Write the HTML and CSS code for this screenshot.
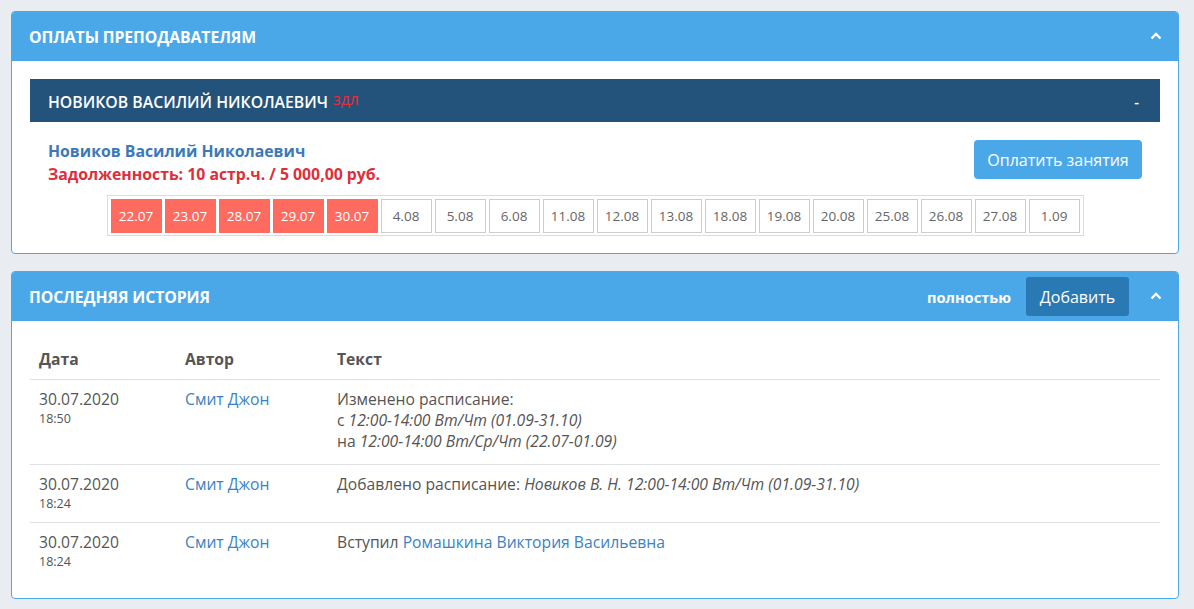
FILE: index.html
```html
<!DOCTYPE html>
<html lang="ru">
<head>
<meta charset="utf-8">
<title>Оплаты преподавателям</title>
<link rel="stylesheet" href="styles.css">
</head>
<body>
<div class="page">
  <section class="panel">
    <header class="panel-head">
      <h2 class="panel-title">Оплаты преподавателям</h2>
      <div class="head-actions">
        <svg class="chev" width="12" height="8" viewBox="0 0 12 8"><polyline points="1.5,6.5 6,2 10.5,6.5" fill="none" stroke="#fff" stroke-width="2.4"/></svg>
      </div>
    </header>
    <div class="panel-body">
      <div class="teacher-head">
        <div class="teacher-title">Новиков Василий Николаевич <span class="tag">здл</span></div>
        <span class="collapse">-</span>
      </div>
      <div class="teacher-info">
        <div class="teacher-text">
          <div class="teacher-name">Новиков Василий Николаевич</div>
          <div class="teacher-debt">Задолженность: 10 астр.ч. / 5 000,00 руб.</div>
        </div>
        <button class="btn-pay">Оплатить занятия</button>
      </div>
      <div class="dates-wrap">
        <div class="dates">
          <span class="date debt">22.07</span>
          <span class="date debt">23.07</span>
          <span class="date debt">28.07</span>
          <span class="date debt">29.07</span>
          <span class="date debt">30.07</span>
          <span class="date">4.08</span>
          <span class="date">5.08</span>
          <span class="date">6.08</span>
          <span class="date">11.08</span>
          <span class="date">12.08</span>
          <span class="date">13.08</span>
          <span class="date">18.08</span>
          <span class="date">19.08</span>
          <span class="date">20.08</span>
          <span class="date">25.08</span>
          <span class="date">26.08</span>
          <span class="date">27.08</span>
          <span class="date">1.09</span>
        </div>
      </div>
    </div>
  </section>

  <section class="panel">
    <header class="panel-head">
      <h2 class="panel-title">Последняя история</h2>
      <div class="head-actions">
        <a class="head-link">полностью</a>
        <button class="btn-add">Добавить</button>
        <svg class="chev" width="12" height="8" viewBox="0 0 12 8"><polyline points="1.5,6.5 6,2 10.5,6.5" fill="none" stroke="#fff" stroke-width="2.4"/></svg>
      </div>
    </header>
    <div class="panel-body panel-body--table">
      <table class="history">
        <thead>
          <tr><th class="c-date">Дата</th><th class="c-author">Автор</th><th>Текст</th></tr>
        </thead>
        <tbody>
          <tr class="tall">
            <td><div>30.07.2020</div><div class="time">18:50</div></td>
            <td><a class="link">Смит Джон</a></td>
            <td>Изменено расписание:<br>с <i>12:00-14:00 Вт/Чт (01.09-31.10)</i><br>на <i>12:00-14:00 Вт/Ср/Чт (22.07-01.09)</i></td>
          </tr>
          <tr>
            <td><div>30.07.2020</div><div class="time">18:24</div></td>
            <td><a class="link">Смит Джон</a></td>
            <td>Добавлено расписание: <i>Новиков В. Н. 12:00-14:00 Вт/Чт (01.09-31.10)</i></td>
          </tr>
          <tr class="last">
            <td><div>30.07.2020</div><div class="time">18:24</div></td>
            <td><a class="link">Смит Джон</a></td>
            <td>Вступил <a class="link">Ромашкина Виктория Васильевна</a></td>
          </tr>
        </tbody>
      </table>
    </div>
  </section>
</div>
</body>
</html>
```

FILE: styles.css
```css
* { box-sizing: border-box; }
html, body { margin: 0; }
body {
  background: #e9edf2;
  font-family: "Open Sans", "Noto Sans", sans-serif;
  color: #555;
  font-size: 15.8px;
}
.page {
  padding: 11px 15px 0 11px;
  display: flex;
  flex-direction: column;
  gap: 17px;
}
.panel {
  background: #fff;
  border: 1px solid #4aa8e8;
  border-radius: 4px;
}
.panel-head {
  height: 49px;
  background: #4aa8e8;
  display: flex;
  align-items: center;
  justify-content: space-between;
  padding: 0 16px 0 17px;
  border-radius: 3px 3px 0 0;
}
.panel-title {
  margin: 0;
  color: #fff;
  font-size: 15.8px;
  font-weight: 700;
  text-transform: uppercase;
  letter-spacing: -0.1px;
}
.head-actions {
  display: flex;
  align-items: center;
}
.chev { display: block; margin-left: 21px; margin-top: -1px; }
.head-link {
  color: #fff;
  font-weight: 700;
  font-size: 14.6px;
  margin-right: 15px;
}
.btn-add {
  height: 39px;
  width: 103px;
  border: 0;
  border-radius: 3px;
  background: #2979b4;
  color: #fff;
  font-family: inherit;
  font-size: 16px;
  padding: 0;
}
.panel-body {
  padding: 18px 18px 17px 18px;
}
.panel-body--table { padding-bottom: 18px; }
.teacher-head {
  height: 43px;
  background: #23527b;
  display: flex;
  align-items: center;
  justify-content: space-between;
  padding: 0 21px 0 18px;
  color: #fff;
}
.teacher-title {
  font-weight: 600;
  font-size: 15.8px;
  text-transform: uppercase;
}
.tag {
  color: #e0303e;
  font-size: 15.8px;
  font-weight: 400;
  text-transform: none;
  vertical-align: 3px;
  margin-left: 1px;
}
.collapse { font-size: 15px; font-weight: 600; }
.teacher-info {
  display: flex;
  justify-content: space-between;
  align-items: flex-start;
  padding: 18px 18px 0 18px;
}
.teacher-text {
  font-weight: 700;
  font-size: 15.8px;
  line-height: 23px;
}
.teacher-name { color: #3b79b8; }
.teacher-debt { color: #dd2f3b; }
.btn-pay {
  height: 39px;
  width: 168px;
  border: 0;
  border-radius: 4px;
  background: #4aa8e8;
  color: #fff;
  font-family: inherit;
  font-size: 16px;
  padding: 0;
}
.dates-wrap {
  display: flex;
  justify-content: center;
  margin-top: 9px;
}
.dates {
  display: flex;
  gap: 3px;
  padding: 3px 3px 2px 3px;
  border: 1px solid #dcdcdc;
}
.date {
  width: 51px;
  height: 34px;
  border: 1px solid #cccccc;
  display: flex;
  align-items: center;
  justify-content: center;
  font-size: 13.5px;
  color: #666;
}
.date.debt {
  background: #ff6b5f;
  border-color: #ff6b5f;
  color: #fff;
}
.history {
  width: 100%;
  border-collapse: collapse;
  line-height: 21px;
  font-size: 15.7px;
}
.history th {
  text-align: left;
  font-weight: 700;
  color: #555;
  padding: 10px 9px 9px;
  border-bottom: 1px solid #dfe1e6;
}
.history td {
  padding: 9px 9px 9px;
  vertical-align: top;
  border-bottom: 1px solid #dfe1e6;
}
.history tr.tall td { padding-bottom: 12px; }
.history tr.last td { border-bottom: 0; }
.c-date { width: 146px; }
.c-author { width: 152px; }
.time { font-size: 12.5px; line-height: 18px; }
.link { color: #3a82c4; }
.history i { font-style: italic; }
```
